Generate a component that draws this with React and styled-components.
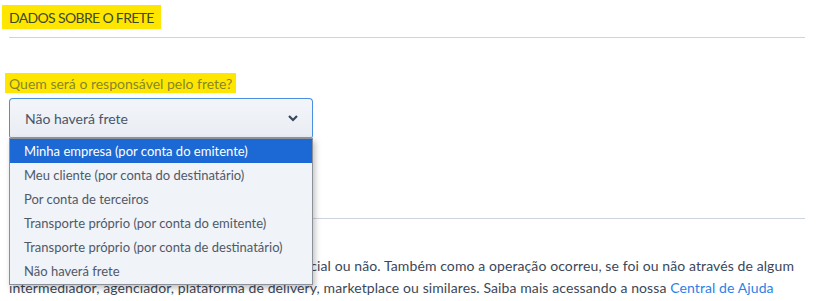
import React from "react";
import styled, { createGlobalStyle } from "styled-components";

const GlobalStyle = createGlobalStyle`
  body {
    margin: 0;
    background: #ffffff;
    font-family: "Lato", "Open Sans", sans-serif;
  }
`;

const Page = styled.div`
  padding: 5px 12px 0 9px;
`;

const SectionTitle = styled.h2`
  display: inline-block;
  margin: 0 0 0 -7px;
  padding: 0 7px;
  height: 24px;
  line-height: 25px;
  background: #ffe600;
  color: #3b4a2c;
  font-size: 14px;
  font-weight: 400;
  letter-spacing: -0.65px;
`;

const Divider = styled.hr`
  margin: ${(props) => props.$margin || "8px 0 0"};
  border: 0;
  border-top: 1px solid #cdd4dd;
`;

const Field = styled.div`
  margin-top: 35px;
  position: relative;
  z-index: 2;
`;

const Label = styled.label`
  display: inline-block;
  margin-left: -4px;
  padding: 0 4px;
  height: 20px;
  line-height: 21px;
  background: #ffe600;
  color: #86862c;
  font-size: 14px;
`;

const SelectWrap = styled.div`
  position: relative;
  width: 304px;
  margin-top: 5px;
`;

const SelectBox = styled.div`
  box-sizing: border-box;
  height: 40px;
  display: flex;
  align-items: center;
  justify-content: space-between;
  padding: 0 13px 0 15px;
  border: 1px solid #4a90e2;
  border-bottom-color: #8e99a6;
  border-radius: 4px 4px 2px 2px;
  background: linear-gradient(#f3f5f9, #e9edf3);
  color: #4a5566;
  font-size: 14px;
`;

const Menu = styled.ul`
  position: absolute;
  top: 40px;
  left: 0;
  width: 304px;
  box-sizing: border-box;
  margin: 0;
  padding: 0 0 1px;
  list-style: none;
  background: #f0f3f8;
  border: 1px solid #8c9099;
  box-shadow: 2px 3px 6px rgba(0, 0, 0, 0.25);
`;

const Option = styled.li`
  height: 24px;
  line-height: 24px;
  padding-left: 14px;
  font-size: 13px;
  color: ${(props) => (props.$active ? "#ffffff" : "#4f5968")};
  background: ${(props) => (props.$active ? "#1c68d4" : "transparent")};
`;

const Text = styled.p`
  margin: 36px 0 0;
  color: #3c4757;
  font-size: 14px;
  line-height: 22px;
  letter-spacing: 0.1px;
`;

const Link = styled.a`
  color: #2d7fe6;
  text-decoration: none;
`;

const Chevron = () => (
  <svg width="12" height="8" viewBox="0 0 12 8">
    <path d="M2 2 L6 6 L10 2" stroke="#37475a" strokeWidth="2.2" fill="none" />
  </svg>
);

const options = [
  "Minha empresa (por conta do emitente)",
  "Meu cliente (por conta do destinatário)",
  "Por conta de terceiros",
  "Transporte próprio (por conta do emitente)",
  "Transporte próprio (por conta de destinatário)",
  "Não haverá frete",
];

export default function App() {
  return (
    <Page>
      <GlobalStyle />
      <SectionTitle>DADOS SOBRE O FRETE</SectionTitle>
      <Divider />
      <Field>
        <Label>Quem será o responsável pelo frete?</Label>
        <SelectWrap>
          <SelectBox>
            <span>Não haverá frete</span>
            <Chevron />
          </SelectBox>
          <Menu>
            {options.map((o, i) => (
              <Option key={o} $active={i === 0}>
                {o}
              </Option>
            ))}
          </Menu>
        </SelectWrap>
      </Field>
      <Divider $margin="80px 0 0" />
      <Text>
        Informe se a venda foi realizada de forma presencial ou não. Também como a operação
        ocorreu, se foi ou não através de algum intermediador, agenciador, plataforma de
        delivery, marketplace ou similares. Saiba mais acessando a nossa{" "}
        <Link href="#">Central de Ajuda</Link>
      </Text>
    </Page>
  );
}
